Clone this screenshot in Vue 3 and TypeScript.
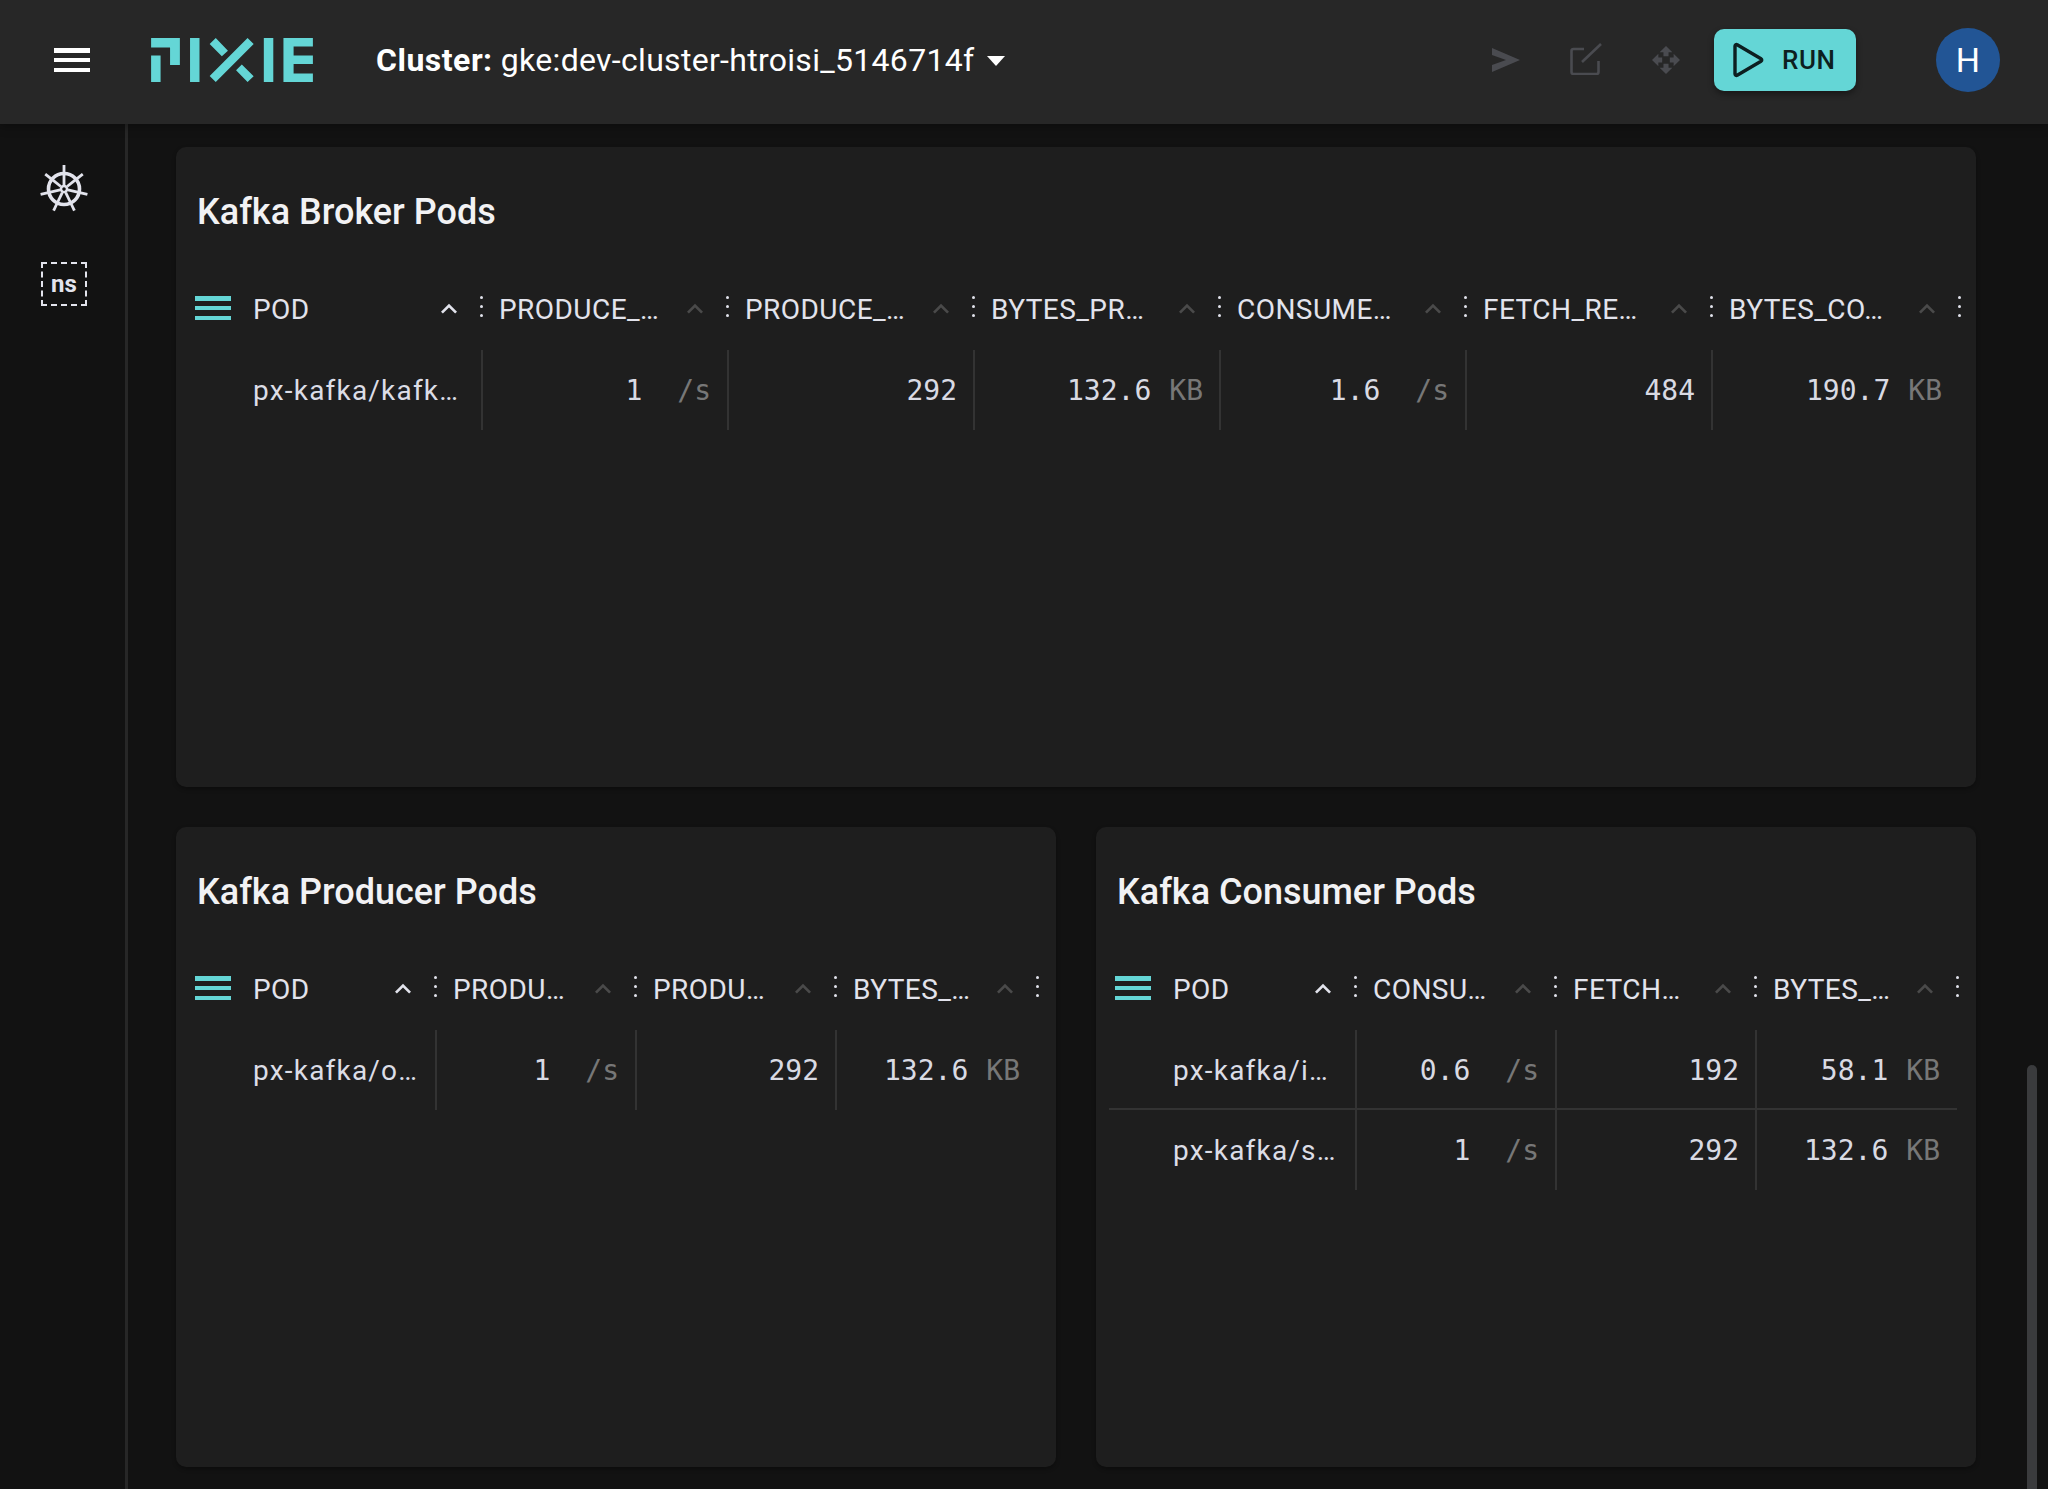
<script setup lang="ts">
interface Cell {
  value: string
  unit?: string
}

interface Row {
  pod: string
  cells: Cell[]
}

interface PodTable {
  title: string
  size: 'wide' | 'half'
  columns: string[]
  rows: Row[]
}

const brokers: PodTable = {
  title: 'Kafka Broker Pods',
  size: 'wide',
  columns: ['PRODUCE_…', 'PRODUCE_…', 'BYTES_PR…', 'CONSUME…', 'FETCH_RE…', 'BYTES_CO…'],
  rows: [
    {
      pod: 'px-kafka/kafk…',
      cells: [
        { value: '1', unit: ' /s' },
        { value: '292' },
        { value: '132.6', unit: 'KB' },
        { value: '1.6', unit: ' /s' },
        { value: '484' },
        { value: '190.7', unit: 'KB' },
      ],
    },
  ],
}

const clients: PodTable[] = [
  {
    title: 'Kafka Producer Pods',
    size: 'half',
    columns: ['PRODU…', 'PRODU…', 'BYTES_…'],
    rows: [
      {
        pod: 'px-kafka/o…',
        cells: [{ value: '1', unit: ' /s' }, { value: '292' }, { value: '132.6', unit: 'KB' }],
      },
    ],
  },
  {
    title: 'Kafka Consumer Pods',
    size: 'half',
    columns: ['CONSU…', 'FETCH…', 'BYTES_…'],
    rows: [
      {
        pod: 'px-kafka/i…',
        cells: [{ value: '0.6', unit: ' /s' }, { value: '192' }, { value: '58.1', unit: 'KB' }],
      },
      {
        pod: 'px-kafka/s…',
        cells: [{ value: '1', unit: ' /s' }, { value: '292' }, { value: '132.6', unit: 'KB' }],
      },
    ],
  },
]

const tables: PodTable[] = [brokers, ...clients]

// seven spokes of the kubernetes wheel
const spokes = [0, 1, 2, 3, 4, 5, 6].map((i) => (i * 360) / 7)
</script>

<template>
  <div class="app">
    <header class="topbar">
      <div class="menu">
        <span></span>
        <span></span>
        <span></span>
      </div>

      <svg class="logo" viewBox="37 30 478 130" width="162" height="44" fill="#64d6d6">
        <path d="M37 30h85v80H93V58H37zM37 82h28v78H37z" />
        <path d="M152 30h28v130h-28z" />
        <path d="M322 30l18 18-112 112-18-18zM228 30l36 38-18 16-36-36zM305 108l35 35-18 17-34-35z" />
        <path d="M370 30h28v130h-28z" />
        <path d="M428 30h87v25h-57v27h57v25h-57v28h57v25h-87z" />
      </svg>

      <div class="cluster"><strong>Cluster:</strong> gke:dev-cluster-htroisi_5146714f</div>
      <span class="caret"></span>

      <svg class="send" viewBox="0 0 28 24" width="28" height="24" fill="#4a4b50">
        <path d="M0 0l28 12L0 24v-7l14-5L0 7z" />
      </svg>
      <svg class="edit" viewBox="0 0 32 32" width="32" height="32" fill="none" stroke="#4a4b50" stroke-width="2.6">
        <path d="M14 6H3.5A2 2 0 0 0 1.5 8v21a2 2 0 0 0 2 2h23a2 2 0 0 0 2-2V18" />
        <path d="M12 19L31 1" />
      </svg>
      <svg class="move" viewBox="1 1 22 22" width="28" height="28" fill="#4a4b50">
        <path d="M10 9h4V6h3l-5-5-5 5h3v3zm-1 1H6V7l-5 5 5 5v-3h3v-4zm14 2l-5-5v3h-3v4h3v3l5-5zm-9 3h-4v3H7l5 5 5-5h-3v-3z" />
      </svg>

      <button class="run">
        <svg viewBox="0 0 32 36" width="32" height="36" fill="none" stroke="#0d1f20" stroke-width="3.4" stroke-linejoin="round">
          <path d="M3 4a1.5 1.5 0 0 1 2.2-1.3L29 16.700a1.500 1.500 0 0 1 0 2.600L5.200 33.300A1.500 1.500 0 0 1 3 32z" />
        </svg>
        <span>RUN</span>
      </button>

      <div class="avatar">H</div>
    </header>

    <div class="body">
      <aside class="sidebar">
        <svg class="kube" viewBox="-24 -24 48 48" width="48" height="48" fill="none" stroke="#e2e3ec">
          <circle r="15.5" stroke-width="3.6" />
          <circle r="3" stroke-width="2.6" />
          <g v-for="deg in spokes" :key="deg" :transform="`rotate(${deg})`">
            <path d="M0-4V-15" stroke-width="2.8" />
            <path d="M0-15V-24" stroke-width="2.8" />
          </g>
        </svg>
        <div class="ns">ns</div>
      </aside>

      <main class="content">
        <div class="grid">
          <section v-for="t in tables" :key="t.title" class="card" :class="t.size">
            <h2>{{ t.title }}</h2>
            <div class="table">
              <div class="thead">
                <div class="th first">
                  <div class="menu teal">
                    <span></span>
                    <span></span>
                    <span></span>
                  </div>
                  <span class="label">POD</span>
                  <svg class="sort on" viewBox="0 0 24 24" width="32" height="32" fill="currentColor">
                    <path d="M12 8l-6 6 1.41 1.41L12 10.83l4.59 4.58L18 14z" />
                  </svg>
                  <span class="dots"><i></i><i></i><i></i></span>
                </div>
                <div v-for="(col, i) in t.columns" :key="i" class="th">
                  <span class="label">{{ col }}</span>
                  <svg class="sort" viewBox="0 0 24 24" width="32" height="32" fill="currentColor">
                    <path d="M12 8l-6 6 1.41 1.41L12 10.83l4.59 4.58L18 14z" />
                  </svg>
                  <span class="dots"><i></i><i></i><i></i></span>
                </div>
              </div>
              <div v-for="row in t.rows" :key="row.pod" class="tr">
                <div class="td pod">{{ row.pod }}</div>
                <div v-for="(c, i) in row.cells" :key="i" class="td num">
                  <span>{{ c.value }}</span>
                  <span v-if="c.unit" class="unit">{{ c.unit }}</span>
                </div>
              </div>
            </div>
          </section>
        </div>
      </main>

      <div class="scroll-thumb"></div>
    </div>
  </div>
</template>

<style>
html,
body {
  margin: 0;
  background: #121212;
}
</style>

<style scoped>
.app {
  width: 2048px;
  height: 1489px;
  overflow: hidden;
  display: flex;
  flex-direction: column;
  background: #121212;
  color: #e2e3ec;
  font-family: Roboto, 'Liberation Sans', sans-serif;
}

/* Top bar */
.topbar {
  position: relative;
  z-index: 1;
  flex: none;
  height: 124px;
  padding-bottom: 4px;
  box-sizing: border-box;
  display: flex;
  align-items: center;
  background: #272727;
  box-shadow: 0 2px 10px rgba(0, 0, 0, 0.35);
}
.menu {
  width: 36px;
  height: 24px;
  margin-left: 54px;
  display: flex;
  flex-direction: column;
  justify-content: space-between;
}
.menu span {
  display: block;
  height: 4.5px;
  background: #fff;
}
.logo {
  margin-left: 61px;
}
.cluster {
  margin-left: 63px;
  font-size: 32px;
  letter-spacing: 0.3px;
  color: #fff;
  white-space: nowrap;
}
.cluster strong {
  font-weight: 700;
  letter-spacing: 0.5px;
}
.caret {
  margin-left: 13px;
  margin-top: 2px;
  border-left: 9px solid transparent;
  border-right: 9px solid transparent;
  border-top: 10px solid #fff;
}
.send {
  margin-left: auto;
}
.edit {
  margin-left: 50px;
  margin-bottom: 2px;
}
.move {
  margin-left: 50px;
}
.run {
  width: 142px;
  height: 62px;
  margin-left: 34px;
  padding: 0 0 0 18px;
  display: flex;
  align-items: center;
  gap: 18px;
  border: 0;
  border-radius: 10px;
  background: #64d6d6;
  box-shadow: 0 3px 6px rgba(0, 0, 0, 0.4);
  color: #0d1f20;
  font-family: inherit;
  font-size: 26px;
  font-weight: 500;
  letter-spacing: 0.6px;
}
.avatar {
  width: 64px;
  height: 64px;
  margin-left: 80px;
  margin-right: 48px;
  display: flex;
  align-items: center;
  justify-content: center;
  border-radius: 50%;
  background: #225595;
  color: #fff;
  font-size: 34px;
}

/* Page body */
.body {
  position: relative;
  flex: 1;
  display: flex;
  min-height: 0;
}
.sidebar {
  flex: none;
  width: 125px;
  display: flex;
  flex-direction: column;
  align-items: center;
  padding-top: 41px;
  box-sizing: content-box;
  border-right: 3px solid #272727;
}
.kube {
  display: block;
  margin-left: 3px;
}
.ns {
  width: 42px;
  height: 40px;
  margin-top: 49px;
  margin-left: 3px;
  display: flex;
  align-items: center;
  justify-content: center;
  border: 2px dashed #e2e3ec;
  font-size: 24px;
  font-weight: 700;
}
.content {
  flex: 1;
  padding: 23px 0 0 48px;
}
.grid {
  display: grid;
  grid-template-columns: 880px 880px;
  gap: 40px;
}

/* Cards */
.card {
  height: 640px;
  padding: 44px 19px 0 13px;
  box-sizing: border-box;
  border-radius: 10px;
  background: #1e1e1e;
  box-shadow: 0 2px 4px rgba(0, 0, 0, 0.3);
}
.card.wide {
  grid-column: 1 / 3;
}
h2 {
  margin: 0 0 35px 8px;
  font-size: 36px;
  line-height: 42px;
  font-weight: 500;
  color: #f2f2f4;
}

/* Table */
.table {
  --first: 247px;
  --col: 200px;
}
.wide .table {
  --first: 293px;
  --col: 246px;
}
.thead,
.tr {
  display: flex;
}
.thead {
  height: 82px;
}
.tr {
  height: 80px;
  box-sizing: border-box;
}
.tr:not(:last-child) {
  box-shadow: inset 0 -2px 0 #333;
}
.th {
  width: var(--col);
  flex: none;
  display: flex;
  align-items: center;
  padding-left: 17px;
  box-sizing: border-box;
}
.th.first {
  width: var(--first);
  padding-left: 6px;
}
.menu.teal {
  flex: none;
  margin-left: 0;
  margin-right: 22px;
  margin-bottom: 2px;
}
.menu.teal span {
  background: #64d6d6;
}
.label {
  flex: 1;
  font-size: 28px;
  letter-spacing: 0.45px;
  white-space: nowrap;
}
.sort {
  flex: none;
  color: #4a4a4a;
}
.sort.on {
  color: #e2e3ec;
}
.dots {
  flex: none;
  width: 3px;
  height: 21px;
  margin: 0 -1px 6px 15px;
  display: flex;
  flex-direction: column;
  justify-content: space-between;
}
.th:last-child .dots {
  margin-right: -3px;
}
.dots i {
  display: block;
  height: 3px;
  border-radius: 50%;
  background: #e2e3ec;
}
.td {
  flex: none;
  width: var(--col);
  display: flex;
  align-items: center;
  box-sizing: border-box;
  font-size: 28px;
}
.td.pod {
  width: calc(var(--first) - 1px);
  padding-left: 64px;
  letter-spacing: 1.2px;
  color: #dcdde6;
  white-space: nowrap;
}
.td.num {
  justify-content: flex-end;
  padding-right: 16px;
  border-left: 2px solid #333;
  color: #d9dae3;
  font-family: 'DejaVu Sans Mono', 'Liberation Mono', monospace;
}
.td.num:last-child {
  width: calc(var(--col) + 1px);
}
.unit {
  margin-left: 18px;
  color: #777;
  white-space: pre;
}

.scroll-thumb {
  position: absolute;
  left: 2027px;
  top: 941px;
  bottom: -10px;
  width: 10px;
  border-radius: 5px;
  background: #3a3b3d;
}
</style>
